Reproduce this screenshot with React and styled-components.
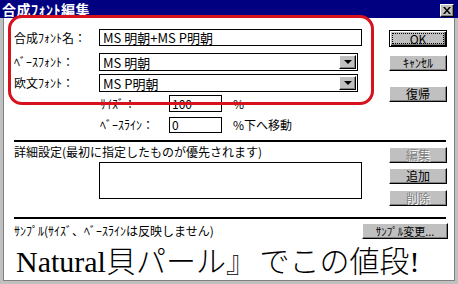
import React from 'react';
import styled, { createGlobalStyle } from 'styled-components';

const Global = createGlobalStyle`
  html, body { margin: 0; padding: 0; background: #fff; }
  * { box-sizing: border-box; }
`;

const UI = `"Noto Sans CJK JP", "Liberation Sans", sans-serif`;

const Window = styled.div`
  position: relative;
  width: 458px;
  height: 284px;
  background: #fff;
  font: 12px/1 ${UI};
  color: #000;
  overflow: hidden;
  display: flex;
  flex-direction: column;
`;

const TitleBar = styled.div`
  height: 18px;
  flex: none;
  background: #000080;
  display: flex;
  align-items: center;
  justify-content: space-between;
  padding: 0 4px 0 2px;
`;

const Title = styled.span`
  color: #fff;
  font: bold 14px/1 ${UI};
  letter-spacing: 0.5px;
`;

const CloseBox = styled.div`
  width: 14px;
  height: 13px;
  margin-top: 2px;
  background: #c0c0c0;
  border: 1px solid;
  border-color: #fff #000 #000 #fff;
  box-shadow: inset -1px -1px #808080;
  display: flex;
  align-items: center;
  justify-content: center;
`;

const Frame = styled.div`
  flex: 1;
  border-left: 3px solid #c0c0c0;
  border-right: 3px solid #c0c0c0;
  border-bottom: 3px solid #c0c0c0;
  box-shadow: inset 1px 0 #808080, inset -1px 0 #808080, inset 0 -1px #808080;
  padding: 0 6px 0 11px;
  display: flex;
  flex-direction: column;
`;

const Section = styled.div`
  display: flex;
  align-items: flex-start;
`;

const Column = styled.div`
  width: ${p => p.$w}px;
  margin-left: ${p => p.$ml || 0}px;
  display: flex;
  flex-direction: column;
`;

const Row = styled.div`
  display: flex;
  align-items: center;
  height: ${p => p.$h}px;
  margin-top: ${p => p.$mt}px;
  padding-left: ${p => p.$indent || 0}px;
`;

const Label = styled.span`
  width: ${p => p.$w}px;
  flex: none;
  white-space: nowrap;
`;

const TextBox = styled.div`
  width: ${p => p.$w}px;
  height: 100%;
  border: 1px solid #000;
  background: #fff;
  display: flex;
  align-items: center;
  padding-left: ${p => p.$pad || 3}px;
  font-size: ${p => p.$fs || 12}px;
  white-space: nowrap;
`;

const Combo = styled(TextBox)`
  justify-content: space-between;
  padding-right: 1px;
`;

const DropBtn = styled.div`
  width: 17px;
  height: 14px;
  background: #c0c0c0;
  border: 1px solid;
  border-color: #fff #000 #000 #fff;
  box-shadow: inset -1px -1px #808080;
  display: flex;
  align-items: center;
  justify-content: center;
`;

const Arrow = styled.span`
  width: 0;
  height: 0;
  border-left: 4px solid transparent;
  border-right: 4px solid transparent;
  border-top: 4px solid #000;
`;

const Unit = styled.span`
  margin-left: 11px;
  white-space: nowrap;
`;

const Separator = styled.div`
  width: 432px;
  height: 2px;
  background: #000;
  margin-top: ${p => p.$mt}px;
`;

const Button = styled.button`
  width: ${p => p.$w || 58}px;
  height: ${p => p.$h || 16}px;
  margin-top: ${p => p.$mt || 0}px;
  padding: 0;
  background: #c0c0c0;
  border: 1px solid;
  border-color: #fff #000 #000 #fff;
  box-shadow: inset -1px -1px #808080;
  font: ${p => p.$fs || 12}px/1 ${UI};
  color: ${p => (p.disabled ? '#808080' : '#000')};
  text-shadow: ${p => (p.disabled ? '1px 1px #fff' : 'none')};
  display: flex;
  align-items: center;
  justify-content: center;
  white-space: nowrap;
`;

const DefaultButton = styled(Button)`
  border: 1px solid #000;
  box-shadow: inset 1px 1px #fff, inset -1px -1px #000, inset -2px -2px #808080;
  padding: 2px;
`;

const Focus = styled.span`
  flex: 1;
  align-self: stretch;
  border: 1px dotted #000;
  display: flex;
  align-items: center;
  justify-content: center;
`;

const ListBox = styled.div`
  width: 263px;
  height: 37px;
  margin: 3px 0 0 85px;
  border: 1px solid #000;
  background: #fff;
`;

const SampleHead = styled.div`
  width: 434px;
  display: flex;
  align-items: center;
  justify-content: space-between;
  margin-top: 4px;
`;

const SampleText = styled.div`
  margin: 6px 0 0 2px;
  font-family: "Noto Sans CJK JP", sans-serif;
  font-size: 30px;
  line-height: 28px;
  font-weight: 300;
  word-spacing: -4px;
  white-space: nowrap;
`;

const Latin = styled.span`
  font-family: "Liberation Serif", "DejaVu Serif", serif;
  font-weight: 400;
`;

const Annotation = styled.div`
  position: absolute;
  left: 8px;
  top: 15px;
  width: 366px;
  height: 90px;
  border: 3px solid #d8121c;
  border-radius: 14px;
  pointer-events: none;
`;

export default function App() {
  return (
    <>
      <Global />
      <Window>
        <TitleBar>
          <Title>合成ﾌｫﾝﾄ編集</Title>
          <CloseBox>
            <svg width="8" height="7" viewBox="0 0 8 7">
              <path d="M0 0h2l2 2.5L6 0h2L5 3.5 8 7H6L4 4.5 2 7H0l3-3.5z" fill="#000" />
            </svg>
          </CloseBox>
        </TitleBar>
        <Frame>
          <Section>
            <Column $w={348}>
              <Row $h={17} $mt={11}>
                <Label $w={85}>合成ﾌｫﾝﾄ名：</Label>
                <TextBox $w={263} $fs={13}>MS 明朝+MS P明朝</TextBox>
              </Row>
              <Row $h={18} $mt={7}>
                <Label $w={85}>ﾍﾞｰｽﾌｫﾝﾄ：</Label>
                <Combo $w={259} $fs={13}>
                  MS 明朝
                  <DropBtn><Arrow /></DropBtn>
                </Combo>
              </Row>
              <Row $h={18} $mt={3}>
                <Label $w={85}>欧文ﾌｫﾝﾄ：</Label>
                <Combo $w={259} $fs={13}>
                  MS P明朝
                  <DropBtn><Arrow /></DropBtn>
                </Combo>
              </Row>
              <Row $h={17} $mt={3} $indent={86}>
                <Label $w={69}>ｻｲｽﾞ：</Label>
                <TextBox $w={53} $pad={2}>100</TextBox>
                <Unit>%</Unit>
              </Row>
              <Row $h={16} $mt={5} $indent={86}>
                <Label $w={69}>ﾍﾞｰｽﾗｲﾝ：</Label>
                <TextBox $w={53} $pad={2}>0</TextBox>
                <Unit>%下へ移動</Unit>
              </Row>
            </Column>
            <Column $w={58} $ml={27}>
              <DefaultButton $h={17} $mt={12}><Focus>OK</Focus></DefaultButton>
              <Button $mt={8}>ｷｬﾝｾﾙ</Button>
              <Button $mt={15}>復帰</Button>
            </Column>
          </Section>
          <Separator $mt={7} />
          <Section>
            <Column $w={348}>
              <Row $h={14} $mt={3}>
                <Label>詳細設定(最初に指定したものが優先されます)</Label>
              </Row>
              <ListBox />
            </Column>
            <Column $w={58} $ml={27}>
              <Button $mt={5} disabled>編集</Button>
              <Button $mt={5}>追加</Button>
              <Button $mt={6} disabled>削除</Button>
            </Column>
          </Section>
          <Separator $mt={11} />
          <SampleHead>
            <Label>ｻﾝﾌﾟﾙ(ｻｲｽﾞ、ﾍﾞｰｽﾗｲﾝは反映しません)</Label>
            <Button $w={86} $h={16} $fs={11}>ｻﾝﾌﾟﾙ変更...</Button>
          </SampleHead>
          <SampleText>
            <Latin>Natural</Latin>貝パール』<Latin> </Latin>でこの値段<Latin>!</Latin>
          </SampleText>
        </Frame>
        <Annotation />
      </Window>
    </>
  );
}
